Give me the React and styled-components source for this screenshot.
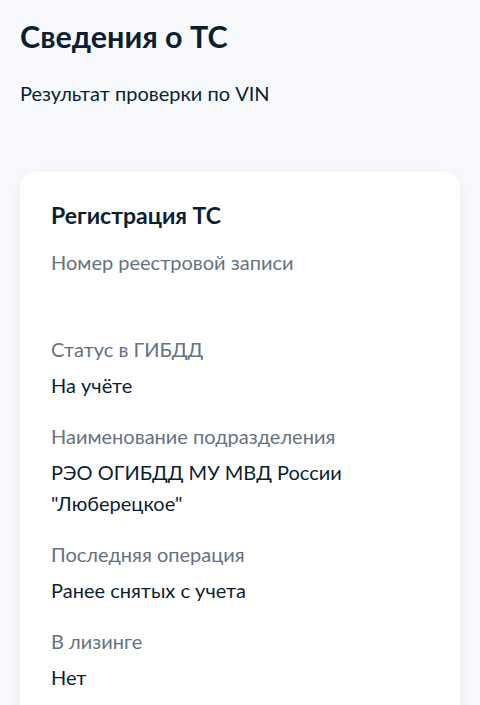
import React from "react";
import styled, { createGlobalStyle } from "styled-components";

const Global = createGlobalStyle`
  html, body {
    margin: 0;
    padding: 0;
    background: #f7f9fc;
  }
  body {
    font-family: Lato, "Noto Sans", sans-serif;
    color: #0b1f33;
    -webkit-font-smoothing: antialiased;
  }
`;

const Page = styled.main`
  padding: 18px 20px 0;
  min-height: 705px;
  box-sizing: border-box;
`;

const Title = styled.h1`
  margin: 0;
  font-size: 30.5px;
  line-height: 36px;
  font-weight: 700;
  color: #0b1f33;
`;

const Subtitle = styled.p`
  margin: 25px 0 0;
  font-size: 20px;
  line-height: 28px;
  color: #0b1f33;
`;

const Card = styled.section`
  margin-top: 65px;
  background: #ffffff;
  border-radius: 16px;
  box-shadow: 0 4px 20px rgba(11, 31, 51, 0.05);
  padding: 28px 30px 40px 31px;
`;

const CardTitle = styled.h2`
  margin: 0;
  font-size: 23px;
  line-height: 30px;
  font-weight: 700;
  color: #0b1f33;
`;

const List = styled.dl`
  margin: 17px 0 0;
  display: flex;
  flex-direction: column;
  gap: 20px;
`;

const Item = styled.div`
  display: flex;
  flex-direction: column;
  gap: 5px;
`;

const Label = styled.dt`
  font-size: 20px;
  line-height: 31px;
  color: #66727f;
`;

const Value = styled.dd`
  margin: 0;
  font-size: 20px;
  line-height: 31px;
  min-height: 31px;
  color: #0b1f33;
`;

const rows = [
  { label: "Номер реестровой записи", value: "" },
  { label: "Статус в ГИБДД", value: "На учёте" },
  {
    label: "Наименование подразделения",
    value: 'РЭО ОГИБДД МУ МВД России "Люберецкое"',
  },
  { label: "Последняя операция", value: "Ранее снятых с учета" },
  { label: "В лизинге", value: "Нет" },
];

export default function App() {
  return (
    <>
      <Global />
      <Page>
        <Title>Сведения о ТС</Title>
        <Subtitle>Результат проверки по VIN</Subtitle>
        <Card>
          <CardTitle>Регистрация ТС</CardTitle>
          <List>
            {rows.map((r) => (
              <Item key={r.label}>
                <Label>{r.label}</Label>
                <Value>{r.value}</Value>
              </Item>
            ))}
          </List>
        </Card>
      </Page>
    </>
  );
}
